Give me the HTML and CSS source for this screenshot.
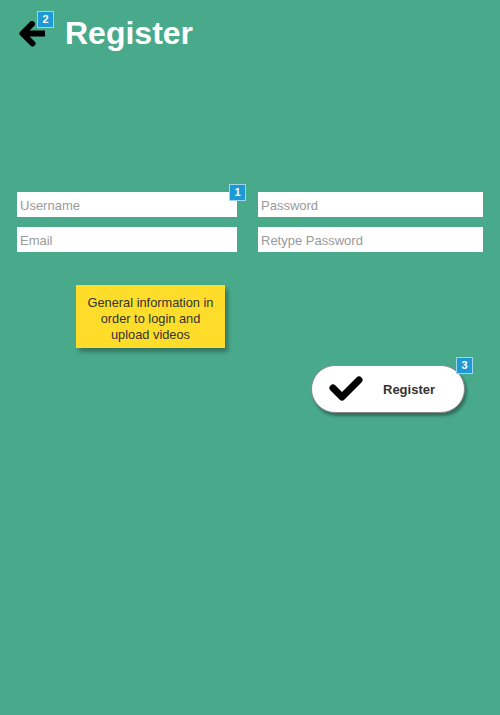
FILE: index.html
```html
<!DOCTYPE html>
<html>
<head>
<meta charset="utf-8">
<link rel="stylesheet" href="styles.css">
</head>
<body>
<div class="page">
  <header class="header">
    <div class="back">
      <svg width="26" height="26" viewBox="0 0 26 26">
        <path d="M27 12.5 H4 M13 3 L3.5 12.5 L13.5 22.5" fill="none" stroke="#000" stroke-width="6" stroke-linecap="round" stroke-linejoin="round"/>
      </svg>
      <span class="badge badge-back">2</span>
    </div>
    <h1 class="title">Register</h1>
  </header>

  <form class="form">
    <div class="field">
      <input class="input" type="text" placeholder="Username">
      <span class="badge badge-form">1</span>
    </div>
    <div class="field"><input class="input" type="password" placeholder="Password"></div>
    <div class="field"><input class="input" type="text" placeholder="Email"></div>
    <div class="field"><input class="input" type="password" placeholder="Retype Password"></div>
  </form>

  <div class="note">General information in order to login and upload videos</div>

  <div class="btn-wrap">
    <button class="btn" type="button">
      <svg width="36" height="30" viewBox="0 0 36 30">
        <path d="M4 14 L13 23 L30 6" fill="none" stroke="#000" stroke-width="7" stroke-linecap="round" stroke-linejoin="round"/>
      </svg>
      <span class="btn-label">Register</span>
    </button>
    <span class="badge badge-btn">3</span>
  </div>
</div>
</body>
</html>
```
FILE: styles.css
```css
html, body {
  margin: 0;
  padding: 0;
}
body {
  background: #49a98b;
  font-family: "Liberation Sans", Arial, sans-serif;
  width: 500px;
  height: 715px;
  overflow: hidden;
}
.page {
  display: flex;
  flex-direction: column;
}
.header {
  display: flex;
  align-items: center;
  padding: 15px 0 0 19px;
}
.back {
  position: relative;
  width: 26px;
  height: 26px;
}
.back svg {
  display: block;
}
.title {
  margin: 0 0 0 20px;
  font-size: 32px;
  line-height: 37px;
  font-weight: bold;
  color: #fff;
}
.badge {
  position: absolute;
  width: 15px;
  height: 15px;
  box-sizing: content-box;
  border: 1px solid #9fd4ee;
  background: #1d9ad6;
  color: #fff;
  font-size: 11px;
  font-weight: bold;
  line-height: 15px;
  text-align: center;
}
.badge-back {
  left: 18px;
  top: -10px;
}
.form {
  display: grid;
  grid-template-columns: 220px 225px;
  grid-auto-rows: 25px;
  column-gap: 21px;
  row-gap: 10px;
  margin: 140px 0 0 17px;
}
.field {
  position: relative;
}
.input {
  display: block;
  box-sizing: border-box;
  width: 100%;
  height: 25px;
  margin: 0;
  border: none;
  outline: none;
  background: #fff;
  padding: 2px 3px 0;
  font-family: "Liberation Sans", Arial, sans-serif;
  font-size: 13px;
  color: #333;
}
.input::placeholder {
  color: #9a9a9a;
}
.badge-form {
  left: 212px;
  top: -8px;
}
.note {
  box-sizing: border-box;
  width: 149px;
  height: 63px;
  margin: 33px 0 0 76px;
  padding: 10px 8px 0;
  background: #fedd2a;
  box-shadow: 3px 4px 4px rgba(0, 0, 0, 0.3);
  color: #333;
  font-size: 12.8px;
  line-height: 16px;
  text-align: center;
}
.btn-wrap {
  position: relative;
  width: 154px;
  margin: 17px 0 0 311px;
}
.btn {
  display: flex;
  align-items: center;
  box-sizing: border-box;
  width: 154px;
  height: 48px;
  margin: 0;
  padding: 0 0 0 17px;
  border: 1px solid #8a8a8a;
  border-radius: 24px;
  background: #fff;
  box-shadow: 2px 3px 3px rgba(0, 0, 0, 0.35);
  font-family: "Liberation Sans", Arial, sans-serif;
}
.btn svg {
  display: block;
}
.btn-label {
  margin-left: 18px;
  font-size: 13px;
  font-weight: bold;
  color: #333;
}
.badge-btn {
  left: 145px;
  top: -8px;
}
```
